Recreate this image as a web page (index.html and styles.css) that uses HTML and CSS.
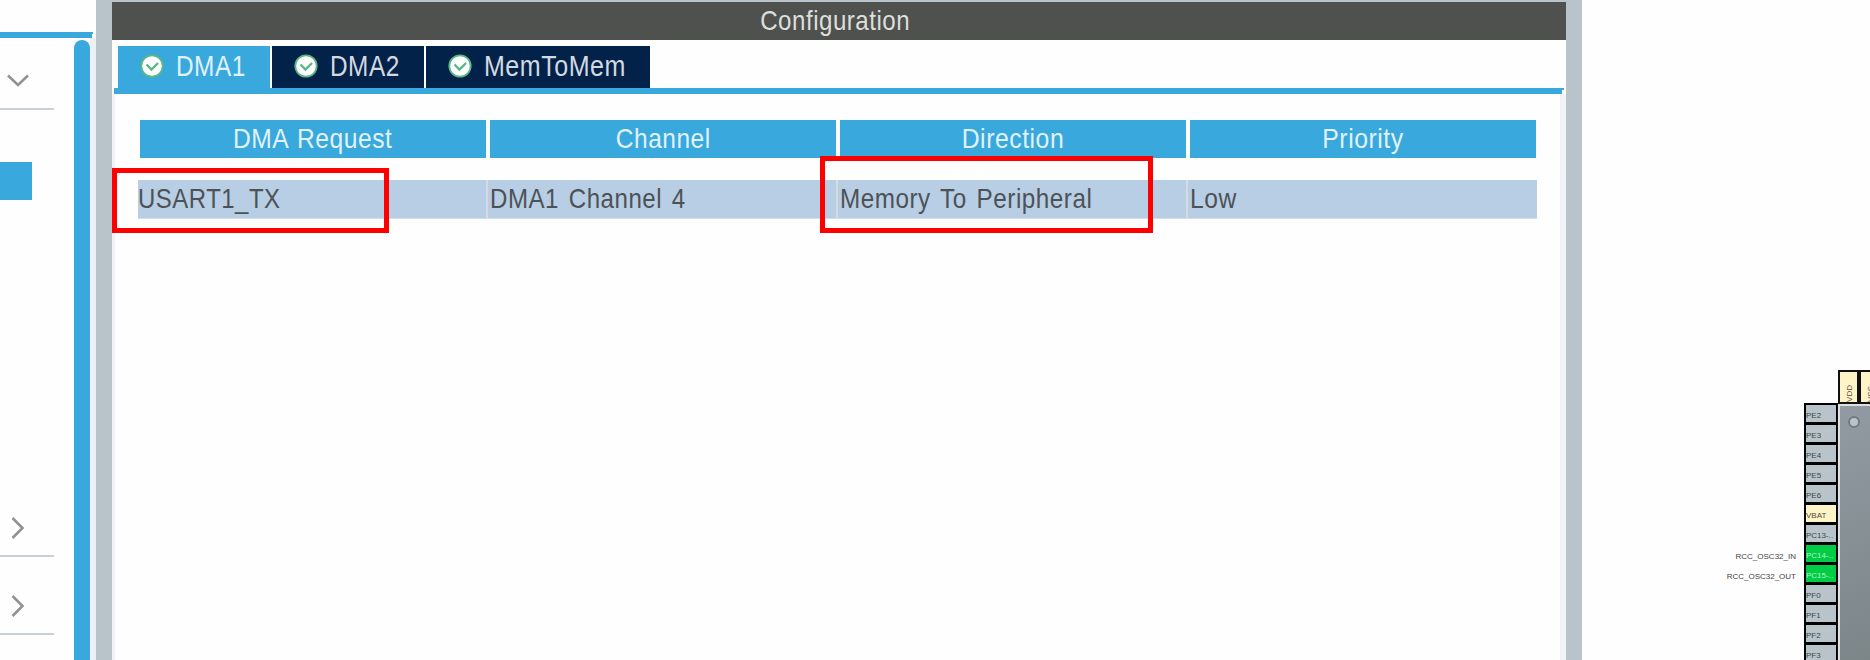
FILE: index.html
```html
<!DOCTYPE html>
<html lang="en">
<head>
<meta charset="utf-8">
<title>DMA Configuration</title>
<link rel="stylesheet" href="styles.css">
</head>
<body>
<div class="app">
  <aside class="sidebar">
    <div class="sidebar-line"></div>
    <div class="sidebar-body">
      <div class="categories">
        <div class="category category-open"><svg width="24" height="16" viewBox="0 0 24 16"><path d="M2 2.500 12 12 22 2.500"/></svg></div>
        <div class="selected-item"></div>
        <div class="category category-first"><svg width="16" height="24" viewBox="0 0 16 24"><path d="M2.500 2 12.500 12 2.500 22"/></svg></div>
        <div class="category"><svg width="16" height="24" viewBox="0 0 16 24"><path d="M2.500 2 12.500 12 2.500 22"/></svg></div>
      </div>
      <div class="scrollbar"></div>
    </div>
  </aside>

  <main class="panel">
    <h1 class="panel-title"><span class="t-config">Configuration</span></h1>
    <nav class="tabs">
      <div class="tab tab-active"><svg class="check" width="24" height="24" viewBox="0 0 24 24"><circle cx="12" cy="12" r="10.700"/><path d="M6.500 10.500 11.500 15.500 18 9"/></svg><span class="t-dma1">DMA1</span></div>
      <div class="tab tab-two"><svg class="check" width="24" height="24" viewBox="0 0 24 24"><circle cx="12" cy="12" r="10.700"/><path d="M6.500 10.500 11.500 15.500 18 9"/></svg><span class="t-dma2">DMA2</span></div>
      <div class="tab tab-mem"><svg class="check" width="24" height="24" viewBox="0 0 24 24"><circle cx="12" cy="12" r="10.700"/><path d="M6.500 10.500 11.500 15.500 18 9"/></svg><span class="t-mem">MemToMem</span></div>
    </nav>
    <div class="tab-line"></div>
    <section class="content">
      <div class="table-head">
        <div><span class="t-request">DMA Request</span></div>
        <div><span class="t-channel">Channel</span></div>
        <div><span class="t-direction">Direction</span></div>
        <div><span class="t-priority">Priority</span></div>
      </div>
      <div class="table-row">
        <div><span class="t-usart">USART1_TX</span></div>
        <div><span class="t-dmach">DMA1 Channel 4</span></div>
        <div><span class="t-memory">Memory To Peripheral</span></div>
        <div><span class="t-low">Low</span></div>
      </div>
    </section>
  </main>

  <section class="pinout">
    <div class="top-pins"><div><span>VDD</span></div><div><span>VSS</span></div></div>
    <div class="chip-row">
      <div class="signals"><span>RCC_OSC32_IN</span><span>RCC_OSC32_OUT</span></div>
      <div class="pins">
        <div class="pin">PE2</div>
        <div class="pin">PE3</div>
        <div class="pin">PE4</div>
        <div class="pin">PE5</div>
        <div class="pin">PE6</div>
        <div class="pin pin-power">VBAT</div>
        <div class="pin">PC13-..</div>
        <div class="pin pin-used">PC14-..</div>
        <div class="pin pin-used">PC15-..</div>
        <div class="pin">PF0</div>
        <div class="pin">PF1</div>
        <div class="pin">PF2</div>
        <div class="pin">PF3</div>
      </div>
      <div class="chip"><div class="chip-mark"></div></div>
    </div>
  </section>
  <div class="highlight highlight-request"></div>
  <div class="highlight highlight-direction"></div>
</div>
</body>
</html>
```
FILE: styles.css
```css
* { box-sizing: border-box; }
body { margin: 0; background: #fefefe; font-family: "Liberation Sans", Arial, sans-serif; }
.app { position: relative; display: flex; width: 1870px; height: 660px; overflow: hidden; }
span { white-space: nowrap; }

/* category list */
.sidebar { width: 96px; padding-top: 32px; display: flex; flex-direction: column; }
.sidebar-line { width: 93px; height: 6px; background: #39a8dc; clip-path: polygon(0 0, 100% 0, 100% 33%, 92px 33%, 92px 100%, 0 100%); }
.sidebar-body { flex: 1; display: flex; border-right: 6px solid #eef1f4; }
.categories { width: 74px; }
.categories svg { display: block; fill: none; stroke: #929292; stroke-width: 2.6; }
.category { width: 54px; height: 78px; padding: 37px 0 0 10px; border-bottom: 2px solid #c7d1d8; }
.category-open { height: 72px; padding: 35px 0 0 6px; }
.selected-item { width: 32px; height: 38px; margin-top: 52px; background: #39a8dc; }
.category-first { height: 357px; padding-top: 316px; }
.scrollbar { width: 16px; margin-top: 2px; border-radius: 8px 8px 0 0; background: #39a8dc; }

/* configuration panel */
.panel { width: 1486px; border: 16px solid #b8c4ca; border-width: 2px 16px 0; display: flex; flex-direction: column; }
.panel span { display: inline-block; }
.panel-title { margin: 0; height: 38px; padding-right: 8px; line-height: 38px; background: #4f514f; color: #dededc; text-align: center; font-size: 28px; font-weight: 400; }
.tabs { display: flex; gap: 2px; height: 48px; padding: 6px 0 0 6px; }
.tab { display: flex; padding: 8px 0 0 22px; gap: 12px; width: 152px; height: 42px; background: #03224a; color: #d3d9e0; font-size: 29px; line-height: 24px; }
.tab span { transform-origin: left; }
.tab-active { background: #39a8dc; color: #e0f2fb; }
.tab-mem { width: 224px; }
.check { flex: none; }
.check circle { fill: #fff; stroke: #57b982; stroke-width: 1.8; }
.check path { fill: none; stroke: #58b783; stroke-width: 2.4; }
.tab-line { width: 1450px; height: 6px; margin-left: 2px; background: #39a8dc; clip-path: polygon(0 0, 100% 0, 100% 33%, 1448px 33%, 1448px 100%, 0 100%); }
.content { flex: 1; border-left: 3px solid #f0f2f5; border-right: 6px solid #f0f2f5; padding-top: 26px; }
.table-head { display: grid; grid-template-columns: repeat(4, 346px); gap: 4px; margin-left: 25px; height: 38px; }
.table-head div { background: #39a8dc; color: #e0f2fb; font-size: 28px; line-height: 37px; text-align: center; }
.table-row { display: grid; grid-template-columns: 348px 348px 348px 349px; gap: 2px; width: 1399px; height: 39px; margin: 22px 0 0 23px; background: #d4dbe2; border-bottom: 1px solid #d6dde8; }
.table-row div { background: #b8cee5; color: #4d5256; font-size: 28px; line-height: 37px; padding-left: 2px; }
.table-row div:first-child { padding-left: 0; }
.table-row span { transform-origin: left; }

/* horizontal condensing of the labels */
.panel span { letter-spacing: .6px; }
.t-config { transform: scaleX(.86); }
.t-dma1, .t-dma2 { transform: scaleX(.84); }
.t-mem { transform: scaleX(.863); }
.t-memory { transform: scaleX(.866); word-spacing: 3px; }
.t-dmach { transform: scaleX(.86); word-spacing: 3px; }
.t-request { transform: scaleX(.88); word-spacing: 2px; }
.t-channel { transform: scaleX(.875); }
.t-direction { transform: scaleX(.885); }
.t-priority { transform: scaleX(.885); }
.t-usart { transform: scaleX(.855); }
.t-low { transform: scaleX(.88); }

/* pinout view */
.pinout { width: 288px; padding-top: 370px; }
.top-pins { display: flex; height: 33px; margin-left: 256px; }
.top-pins div { flex: none; width: 21px; height: 34px; padding-left: 3px; border: 2px solid #111; background: #fff3c8; display: flex; align-items: flex-end; justify-content: center; }
.top-pins span { writing-mode: vertical-rl; transform: rotate(180deg); font-size: 8px; line-height: 8px; color: #4f4b3b; }
.chip-row { display: flex; height: 257px; }
.signals { width: 222px; padding: 144px 8px 0 0; text-align: right; font-size: 8px; line-height: 20px; color: #444; }
.signals span { display: block; }
.pins { width: 33px; }
.pin { height: 20px; border: 2px solid #000; border-width: 2px 1px 1px 2px; background: #b8c4ca; color: #3f464a; font-size: 8px; line-height: 22px; overflow: hidden; white-space: nowrap; }
.pin-power { background: #fff3c8; color: #4f4b3b; }
.pin-used { background: #00cc44; color: #b9f3ca; }
.chip { flex: 1; height: 270px; padding: 12px 0 0 10px; border: solid #111; border-width: 1px 0 0 1px; box-shadow: inset 2px 2px #dce0e2; background: linear-gradient(155deg, #929ba2, #7b8487); }
.chip-mark { width: 12px; height: 12px; border: 2px solid #6f7c82; border-radius: 50%; background: #b8c4ca; }

/* callout frames */
.highlight { position: absolute; border: 5px solid #f00; }
.highlight-request { left: 112px; top: 168px; width: 277px; height: 65px; }
.highlight-direction { left: 820px; top: 156px; width: 333px; height: 77px; }
```
